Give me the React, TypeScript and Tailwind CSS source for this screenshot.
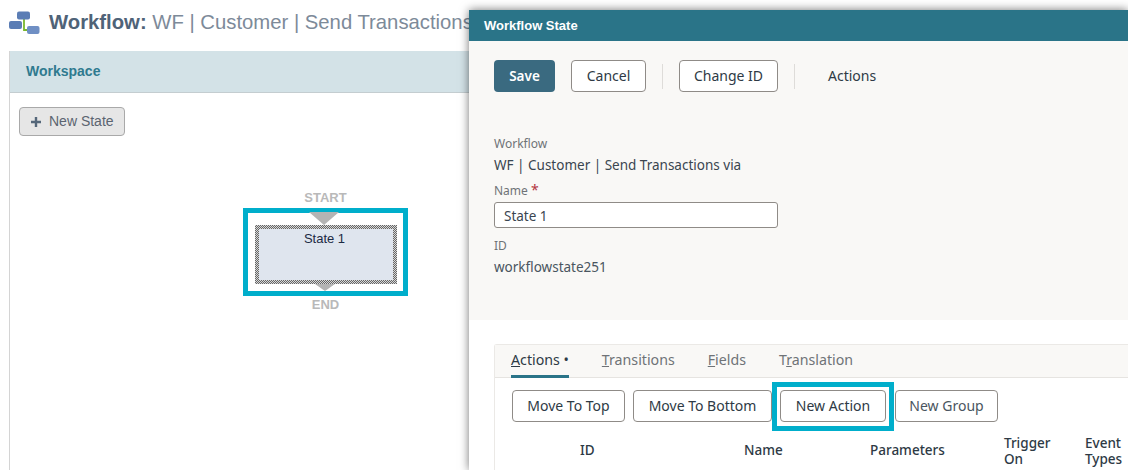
import React from 'react';

const sans = 'font-["Liberation_Sans",Arial,sans-serif]';
const oj = 'font-["Noto_Sans",sans-serif]';

function WorkflowIcon() {
  return (
    <svg width="31" height="24" viewBox="0 0 31 24" className="block shrink-0">
      <path d="M15 8v11h4" stroke="#7ab82e" strokeWidth="1.8" fill="none" />
      <rect x="8" y="0.5" width="13" height="8" rx="2" fill="#5b7db5" />
      <rect x="0" y="10" width="13" height="8" rx="2" fill="#5b7db5" />
      <rect x="18" y="15" width="12.5" height="8" rx="2" fill="#6f8fc4" />
    </svg>
  );
}

function Btn({ children, className = '' }: { children: React.ReactNode; className?: string }) {
  return (
    <button className={`h-[32px] pb-px rounded-[4px] border border-[#8f8b87] bg-white text-[14px] text-[#2e3a45] flex items-center justify-center ${className}`}>
      {children}
    </button>
  );
}

function Tab({ children, active }: { children: React.ReactNode; active?: boolean }) {
  return (
    <div className={`h-[33px] pt-[4px] text-[14.2px] ${active ? 'border-b-[3px] border-[#2a7488] text-[#2e3a45]' : 'text-[#6f7377]'}`}>
      {children}
    </div>
  );
}

function StateNode() {
  return (
    <div className="flex flex-col items-center w-[165px]">
      <div className={`${sans} text-[13px] font-bold leading-[14px] text-[#b9b9b9]`}>START</div>
      <div className="relative w-[165px] h-[88px] mt-[3px] border-[5px] border-[#00aecb] bg-white flex justify-center pt-[12px]">
        <div className="relative w-[142px] h-[59px] p-[4px] bg-[repeating-conic-gradient(#666_0_25%,#d8d8d8_0_50%)] bg-[length:2px_2px]">
          <div className={`${sans} h-full bg-[#dfe5ee] text-center text-[13px] leading-[14px] pt-[3px] pr-[2px] text-[#1c2a44]`}>
            State 1
          </div>
        </div>
        <div className="absolute top-[-1px] left-[61px] w-0 h-0 border-x-[15px] border-x-transparent border-t-[13px] border-t-[#b4b4b4]" />
        <div className="absolute bottom-0 left-[67px] w-0 h-0 border-x-[10px] border-x-transparent border-t-[7px] border-t-[#b4b4b4]" />
      </div>
      <div className={`${sans} text-[13px] font-bold leading-[14px] mt-[2px] text-[#b9b9b9]`}>END</div>
    </div>
  );
}

export default function App() {
  return (
    <div className="relative w-[1128px] h-[470px] overflow-hidden bg-white">
      {/* page behind the dialog */}
      <div className={`${sans} flex flex-col h-full`}>
        <div className="flex items-center w-[469px] overflow-hidden h-[51px] pl-[9px] pb-[6px] gap-[9px] whitespace-nowrap text-[20.3px]">
          <WorkflowIcon />
          <div className="text-[#7d8a99]">
            <span className="font-bold text-[#4f6378]">Workflow:</span> WF | Customer | Send Transactions
          </div>
        </div>
        <div className="flex-1 ml-[9px] border-l border-[#d4d4d4]">
          <div className="h-[42px] flex items-center pl-[16px] bg-[#d3e2e7] border-b border-[#c4cdd0] text-[14px] font-bold text-[#2f7a8f]">
            Workspace
          </div>
          <div className="pl-[9px] pt-[14px]">
            <button className="flex items-center h-[29px] w-[106px] pl-[10px] gap-[7px] rounded-[4px] border border-[#a9a9a9] bg-[#e6e6e6] text-[14px] text-[#5b6470]">
              <svg width="12" height="12" viewBox="0 0 12 12"><path d="M6 1v10M1 6h10" stroke="#55677a" strokeWidth="2.4" /></svg>
              New State
            </button>
          </div>
          <div className="pl-[233px] pt-[55px]">
            <StateNode />
          </div>
        </div>
      </div>

      {/* dialog */}
      <div className={`${oj} absolute left-[469px] top-[10px] w-[659px] h-[460px] flex flex-col bg-white shadow-[0_0_9px_rgba(0,0,0,0.55)]`}>
        <div className={`${sans} h-[31px] flex items-center pl-[15px] bg-[#2a7488] text-[13px] font-bold text-white`}>
          Workflow State
        </div>
        <div className="h-[279px] bg-[#f9f8f6] pl-[25px]">
          <div className="flex items-center pt-[19px]">
            <button className="h-[32px] w-[61px] rounded-[4px] bg-[#3a6a80] text-[13.5px] font-semibold text-white">Save</button>
            <Btn className="w-[75px] ml-[16px]">Cancel</Btn>
            <div className="w-px h-[25px] bg-[#dedcd9] ml-[16px]" />
            <Btn className="w-[99px] ml-[16px]">Change ID</Btn>
            <div className="w-px h-[25px] bg-[#dedcd9] ml-[16px]" />
            <div className="ml-[33px] pb-[2px] text-[14px] text-[#2e3a45]">Actions</div>
          </div>
          <div className="pt-[43px] text-[12px] leading-[18px] text-[#6f7377]">Workflow</div>
          <div className="pt-[3px] text-[13.5px] leading-[18px] text-[#3a4550] whitespace-nowrap">WF | Customer | Send Transactions via</div>
          <div className="pt-[8px] text-[12px] leading-[16px] text-[#6f7377]">
            Name <span className="text-[#b3363e] text-[14px]">*</span>
          </div>
          <div className="mt-[3px] w-[284px] h-[26px] rounded-[3px] border border-[#8f8b87] bg-white pl-[9px] pt-px text-[13.5px] leading-[24px] text-[#3a4550]">State 1</div>
          <div className="pt-[9px] text-[12px] leading-[18px] text-[#6f7377]">ID</div>
          <div className="pt-[3px] text-[13.5px] leading-[18px] text-[#4a5560]">workflowstate251</div>
        </div>
        <div className="pl-[25px] pt-[24px] flex-1 bg-white">
          <div className="h-full rounded-tl-[3px] border-l border-t border-[#ebe9e6]">
            <div className="h-[33px] flex gap-[33px] pl-[16px] bg-[#f9f8f6] border-b border-[#e6e4e1] whitespace-nowrap">
              <Tab active><span className="underline">A</span>ctions •</Tab>
              <Tab><span className="underline">T</span>ransitions</Tab>
              <Tab><span className="underline">F</span>ields</Tab>
              <Tab>T<span className="underline">r</span>anslation</Tab>
            </div>
            <div className="flex pl-[17px] pt-[12px] relative">
              <Btn className="w-[113px]">Move To Top</Btn>
              <Btn className="w-[139px] ml-[8px]">Move To Bottom</Btn>
              <Btn className="w-[106px] ml-[8px]">New Action</Btn>
              <Btn className="w-[103px] ml-[9px] text-[#4a5560]">New Group</Btn>
              {/* callout round New Action */}
              <div className="absolute left-[277px] top-[4px] w-[122px] h-[49px] border-[5px] border-[#00aecb] pointer-events-none" />
            </div>
            <div className="relative h-[44px] text-[13.5px] leading-[16px] text-[#2e3a45]">
              <span className="absolute left-[85px] top-[20px] font-medium">ID</span>
              <span className="absolute left-[249px] top-[20px] font-medium">Name</span>
              <span className="absolute left-[375px] top-[20px] font-medium">Parameters</span>
              <span className="absolute left-[509px] top-[13px] font-medium">Trigger<br />On</span>
              <span className="absolute left-[590px] top-[13px] font-medium">Event<br />Types</span>
            </div>
          </div>
        </div>
      </div>
    </div>
  );
}
